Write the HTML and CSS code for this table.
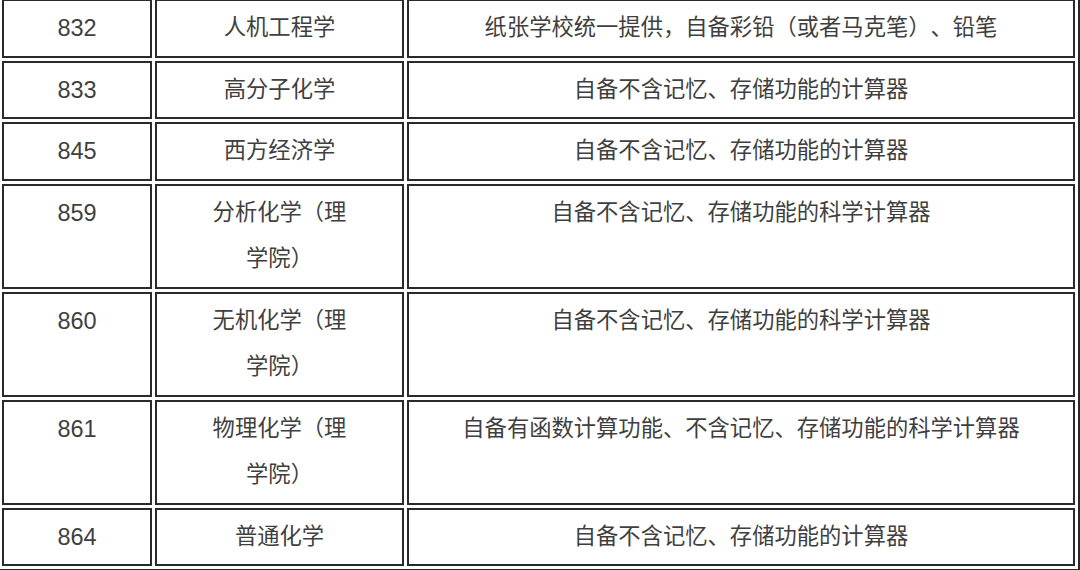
FILE: index.html
```html
<!DOCTYPE html>
<html lang="zh-CN">
<head>
<meta charset="utf-8">
<title>考试用具</title>
<link rel="stylesheet" href="styles.css">
</head>
<body>
<div class="page">
  <table class="exam-table">
    <tbody>
      <tr>
        <td class="c-code">832</td>
        <td class="c-name">人机工程学</td>
        <td class="c-tool">纸张学校统一提供，自备彩铅（或者马克笔）、铅笔</td>
      </tr>
      <tr>
        <td class="c-code">833</td>
        <td class="c-name">高分子化学</td>
        <td class="c-tool">自备不含记忆、存储功能的计算器</td>
      </tr>
      <tr>
        <td class="c-code">845</td>
        <td class="c-name">西方经济学</td>
        <td class="c-tool">自备不含记忆、存储功能的计算器</td>
      </tr>
      <tr>
        <td class="c-code">859</td>
        <td class="c-name">分析化学（理学院）</td>
        <td class="c-tool">自备不含记忆、存储功能的科学计算器</td>
      </tr>
      <tr>
        <td class="c-code">860</td>
        <td class="c-name">无机化学（理学院）</td>
        <td class="c-tool">自备不含记忆、存储功能的科学计算器</td>
      </tr>
      <tr>
        <td class="c-code">861</td>
        <td class="c-name">物理化学（理学院）</td>
        <td class="c-tool">自备有函数计算功能、不含记忆、存储功能的科学计算器</td>
      </tr>
      <tr>
        <td class="c-code">864</td>
        <td class="c-name">普通化学</td>
        <td class="c-tool">自备不含记忆、存储功能的计算器</td>
      </tr>
    </tbody>
  </table>
</div>
</body>
</html>
```

FILE: styles.css
```css
html, body {
  margin: 0;
  padding: 0;
  background: #ffffff;
}

.page {
  width: 1080px;
  height: 570px;
  overflow: hidden;
}

.exam-table {
  box-sizing: border-box;
  width: 1083px;
  margin: -6px 0 0 -3px;
  table-layout: fixed;
  border-collapse: separate;
  border-spacing: 3px;
  border: 2px solid #2a2a2a;
  font-family: "Liberation Sans", "Noto Sans CJK SC", sans-serif;
  font-size: 22.3px;
  line-height: 46.5px;
  color: #3f3f3f;
  text-spacing-trim: space-all;
  font-feature-settings: "halt" 0, "palt" 0;
}

.exam-table td {
  box-sizing: border-box;
  border: 2px solid #2a2a2a;
  padding: 4px 10px;
  text-align: center;
  vertical-align: top;
}

.exam-table .c-code {
  width: 150px;
  font-size: 23.5px;
}

.exam-table .c-name {
  width: 249px;
  padding-left: 50px;
  padding-right: 50px;
}

.exam-table .c-tool {
  width: 668px;
}
```
